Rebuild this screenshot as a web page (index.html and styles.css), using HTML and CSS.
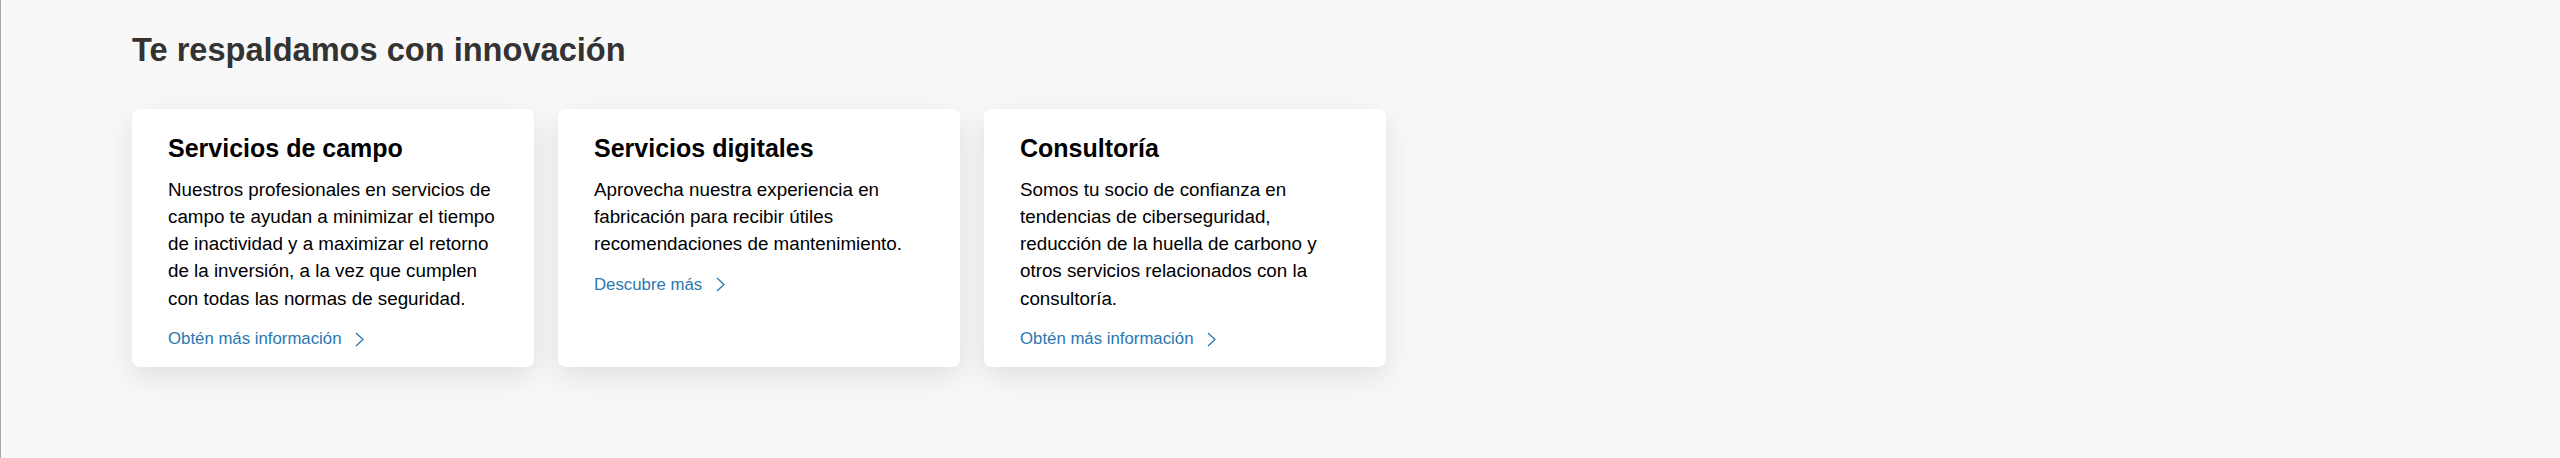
FILE: index.html
```html
<!DOCTYPE html>
<html lang="es">

<head>
    <meta charset="UTF-8">
    <meta name="viewport" content="width=device-width, initial-scale=1.0">
    <title>Te respaldamos con innovación</title>
    <link rel="stylesheet" href="styles.css">
</head>

<body>
    <section class="services">
        <h2 class="services-title">Te respaldamos con innovación</h2>

        <div class="cards">
            <div class="card">
                <h3 class="card-title">Servicios de campo</h3>
                <p class="card-text">Nuestros profesionales en servicios de campo te ayudan a minimizar el tiempo de inactividad y a maximizar el retorno de la inversión, a la vez que cumplen con todas las normas de seguridad.</p>
                <a class="card-link" href="#">Obtén más información
                    <svg class="chevron" width="9" height="15" viewBox="0 0 9 15"><polyline points="1,1 8,7.5 1,14" /></svg>
                </a>
            </div>

            <div class="card">
                <h3 class="card-title">Servicios digitales</h3>
                <p class="card-text">Aprovecha nuestra experiencia en fabricación para recibir útiles recomendaciones de mantenimiento.</p>
                <a class="card-link" href="#">Descubre más
                    <svg class="chevron" width="9" height="15" viewBox="0 0 9 15"><polyline points="1,1 8,7.5 1,14" /></svg>
                </a>
            </div>

            <div class="card">
                <h3 class="card-title">Consultoría</h3>
                <p class="card-text">Somos tu socio de confianza en tendencias de ciberseguridad, reducción de la huella de carbono y otros servicios relacionados con la consultoría.</p>
                <a class="card-link" href="#">Obtén más información
                    <svg class="chevron" width="9" height="15" viewBox="0 0 9 15"><polyline points="1,1 8,7.5 1,14" /></svg>
                </a>
            </div>
        </div>
    </section>
</body>

</html>
```

FILE: styles.css
```css
body {
  margin: 0;
  min-height: 100vh;
  background-color: #f8f8f8;
  border-left: 1px solid #a6a6a6;
  font-family: "Liberation Sans", Arial, Helvetica, sans-serif;
  color: #000;
}

.services {
  padding: 31px 0 0 131px;
}

.services-title {
  margin: 0 0 40px;
  font-size: 32.6px;
  line-height: 38px;
  font-weight: bold;
  color: #333;
}

.cards {
  display: grid;
  grid-template-columns: repeat(3, 402px);
  gap: 24px;
}

.card {
  background-color: white;
  border-radius: 8px;
  padding: 25px 36px 16px;
  box-shadow: 0 10px 30px rgba(0, 0, 0, 0.1);
  display: flex;
  flex-direction: column;
  align-items: flex-start;
}

.card-title {
  margin: 0 0 13.5px;
  font-size: 25px;
  line-height: 28px;
  font-weight: bold;
}

.card-text {
  margin: 0 0 15.5px;
  font-size: 18.8px;
  line-height: 27.3px;
}

.card-link {
  display: inline-flex;
  align-items: center;
  font-size: 16.8px;
  line-height: 24px;
  color: #2b77b1;
  text-decoration: none;
}

.chevron {
  margin-left: 14px;
  fill: none;
  stroke: #2b77b1;
  stroke-width: 1.3;
}
```
